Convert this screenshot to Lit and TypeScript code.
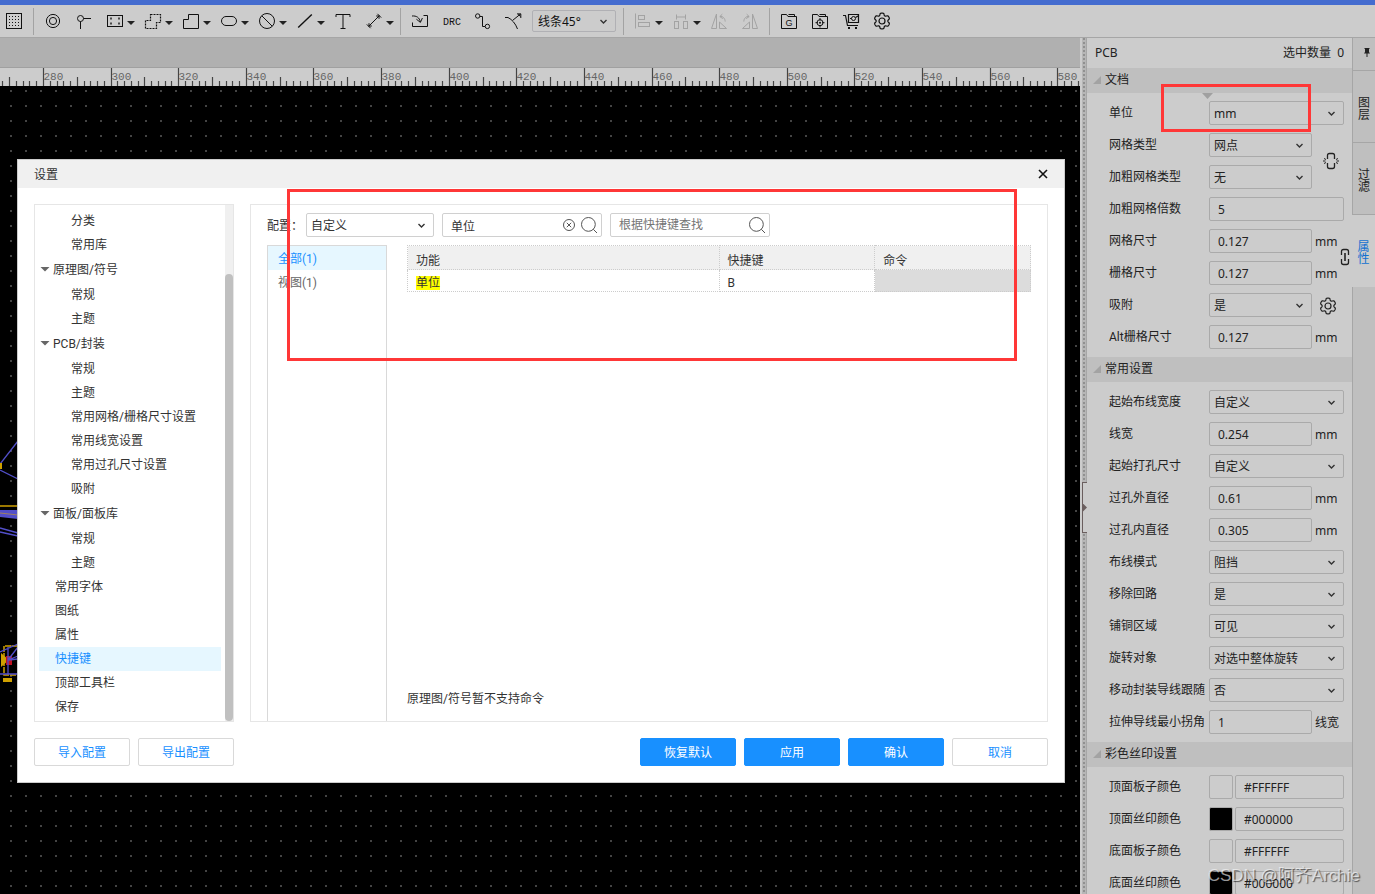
import { LitElement, html, svg, css, nothing } from "lit";
import { customElement, property } from "lit/decorators.js";
import { classMap } from "lit/directives/class-map.js";
import { styleMap } from "lit/directives/style-map.js";

/* Outline of the six-lobed gear, centred in a 16px box. */
const gearPath = (() => {
  const pts: string[] = [];
  for (let i = 0; i < 96; i++) {
    const a = (i / 96) * Math.PI * 2;
    const r = 6.8 + 1.1 * Math.tanh(2 * Math.cos(6 * (a - Math.PI / 2)) + 0.6);
    pts.push(`${(8 + r * Math.cos(a)).toFixed(2)} ${(8 + r * Math.sin(a)).toFixed(2)}`);
  }
  return `M${pts.join("L")}z`;
})();

const icons: Record<string, unknown> = {
  grid: svg`<rect x=".5" y=".5" width="15" height="15"/>
    ${[3, 6, 9, 12].map((y) => [3, 6, 9, 12].map((x) => svg`<rect class="dot" x=${x} y=${y} width="1" height="1"/>`))}`,
  pad: svg`<circle cx="8" cy="8" r="6.6"/><circle cx="8" cy="8" r="3.6"/>`,
  via: svg`<circle cx="4.5" cy="5.5" r="3"/><path d="M7.5 5.5H15M4.5 8.5V16"/>`,
  frame: svg`<rect x=".5" y="2.5" width="15" height="11"/><path d="M3 5.5h2M11 5.5h2M3 10.5h2M11 10.5h2" stroke-width="2" opacity=".7"/>`,
  dashed: svg`<path d="M5.5 1.5H15.5V9.5H11.5V15.5H.5V7.5H5.5z" stroke-dasharray="2 1" stroke-width="1.2"/>`,
  region: svg`<path d="M5.5 1.5H15.5V15.5H.5V6.5H5.5z"/>`,
  oval: svg`<rect x=".5" y="3.5" width="15" height="9" rx="4.5"/>`,
  forbid: svg`<circle cx="8" cy="8" r="7.5"/><path d="M2.8 2.8L13.2 13.2"/>`,
  line: svg`<path d="M1.2 14.6L14.8 1.4" stroke-width="1.4"/>`,
  text: svg`<path d="M1 4V1.5H15V4M8 1.5V15.5M5.5 15.5H10.5"/>`,
  dimension: svg`<path d="M2.5 13.5L13.5 2.5M.8 11.4L4.6 15.2M11.4 .8L15.2 4.6M3 10.2V13H5.8M10.2 3H13V5.8"/>`,
  import: svg`<path d="M.5 9.5V13.5H15.5V2.5H11.5M0 3C4.5 2.6 7.5 4.5 8.3 9M4.4 6.2L8.4 9.4L10.4 5"/>`,
  route: svg`<circle cx="3.7" cy="3" r="2.2"/><circle cx="13.4" cy="13.4" r="2.2"/><path d="M6 3.5H8.5V13.5H11"/>`,
  branch: svg`<path d="M0 4.5H3C7 6.5 10.5 10.5 12.5 16M7.6 7.4L15.5 1M12 .9H15.8V5M13.2 1.4L15.4 3.4"/>`,
  align: svg`<path d="M.5 .5V15.5"/><rect x="3.5" y="2.5" width="6" height="4"/><rect x="3.5" y="9.5" width="11" height="4"/>`,
  distribute: svg`<path d="M3.5 1.5V6.5M12.5 1.5V6.5M3.5 4H12.5"/><rect x="1.5" y="8.5" width="4" height="7"/><rect x="10.5" y="8.5" width="4" height="7"/>`,
  flipA: svg`<path d="M.5 15.5L5.5 1V15.5zM8.5 15.5V9L15.5 15.5zM9 3.5C12 3 14 5.5 14.2 8.5M11.3 1.2L8.8 3.6L11.8 5.6"/>`,
  flipB: svg`<path d="M15.5 15.5L10.5 1V15.5zM7.5 15.5V9L.5 15.5zM7 3.5C4 3 2 5.5 1.8 8.5M4.7 1.2L7.2 3.6L4.2 5.6"/>`,
  folderG: svg`<path d="M.5 15.5V1.5H5.5L7 3.5H15.5V15.5zM7.5 1.5H13.5V3"/><text x="8" y="13" text-anchor="middle">G</text>`,
  folderT: svg`<path d="M.5 15.5V1.5H5.5L7 3.5H15.5V15.5zM7.5 1.5H13.5V3M8 5V7.5M8 12V14.5M3.5 9.7H6M10 9.7H12.5"/><circle cx="8" cy="9.7" r="3"/><circle class="dot" cx="8" cy="9.7" r="1"/>`,
  cart: svg`<path d="M0 2.5H2.5L4.5 12.5H15M5.5 9.5V1.5H15.5V9.5zM7 5.5H8.5M12.5 4.5L15 3" stroke-width="1.2"/><circle cx="10.5" cy="5.5" r="2"/><path d="M5 15H7M12 15H14" stroke-width="2"/>`,
  gear: svg`<path d=${gearPath} stroke-width="1.2"/><circle cx="8" cy="8" r="3" stroke-width="1.2"/>`,
  unlink: svg`<path d="M4.5 6V2.5Q4.5.5 6.5.5H9.5Q11.5.5 11.5 2.5V6M4.5 10V13.5Q4.5 15.5 6.5 15.5H9.5Q11.5 15.5 11.5 13.5V10" stroke-width="1.3"/><path d="M0 8H2.5M1 5.5L3 6.5M1 10.5L3 9.5M13.5 8H16M15 5.5L13 6.5M15 10.5L13 9.5"/>`,
  link: svg`<path d="M4.5 6V2.5Q4.5.5 6.5.5H9.5Q11.5.5 11.5 2.5V6M4.5 10V13.5Q4.5 15.5 6.5 15.5H9.5Q11.5 15.5 11.5 13.5V10" stroke-width="1.3"/><path d="M8 4V12" stroke-width="1.6"/>`,
  search: svg`<circle cx="7.4" cy="7.4" r="6.9"/><path d="M12.3 12.3L16 16"/>`,
  clear: svg`<circle cx="8" cy="8" r="5.5"/><path d="M5.8 5.8L10.2 10.2M10.2 5.8L5.8 10.2"/>`,
  close: svg`<path d="M4 4L12 12M12 4L4 12" stroke-width="1.6"/>`,
  pin: svg`<path class="dot" d="M5.5 4H10.5V5H10V8L11 9.5H5L6 8V5H5.5zM7.5 9.5H8.5V13H7.5z"/>`,
};

const icon = (name: string) =>
  html`<svg class="icon" viewBox="0 0 16 16" width="16" height="16" aria-hidden="true">${icons[name]}</svg>`;

const base = css`
  :host, * { box-sizing: border-box; }
  .icon { display: block; flex: none; overflow: visible; fill: none; stroke: currentColor; stroke-width: 1; }
  .icon .dot, .icon text { fill: currentColor; stroke: none; }
  .icon text { font: 9px "Liberation Sans", sans-serif; }
  button { font: inherit; color: inherit; background: none; border: 0; padding: 0; margin: 0; }
  input, select { font: inherit; color: inherit; margin: 0; min-width: 0; border-radius: 2px; }
  .select { display: grid; align-items: center; min-width: 0; }
  .select select {
    grid-area: 1 / 1; width: 100%; height: 24px; appearance: none;
    padding: 2px 20px 0 4px; border: 1px solid #aaa; background: transparent;
  }
  .select svg { grid-area: 1 / 1; justify-self: end; margin-right: 8px; fill: none; stroke: #333; stroke-width: 1.4; pointer-events: none; }
`;

const dropDown = (id: string, value: string, label?: string) => html`
  <span class="select">
    <select id=${id} aria-label=${label ?? nothing}><option>${value}</option></select>
    <svg viewBox="0 0 9 9" width="9" height="9" aria-hidden="true"><path d="M1.5 3L4.5 6L7.5 3"/></svg>
  </span>`;

type Tool = { name: string; label: string; menu?: boolean; off?: boolean };

@customElement("tool-bar")
class ToolBar extends LitElement {
  static styles = [base, css`
    :host { display: flex; align-items: center; gap: 7px; height: 33px; padding-left: 2px; border-bottom: 1px solid #a6a6a6; background: #ccc; color: #111; flex: none; overflow: hidden; }
    .tool { display: flex; align-items: center; gap: 4px; width: 24px; height: 24px; padding-left: 4px; flex: none; }
    .menu { width: 31px; }
    .off .icon { color: #a3a3a3; }
    .caret { width: 8px; height: 4px; margin-top: 4px; background: #222; clip-path: polygon(0 0, 100% 0, 50% 100%); flex: none; }
    .sep { width: 1px; height: 27px; background: #a3a3a3; flex: none; }
    .drc { padding-top: 2px; font: 10px "Liberation Mono", monospace; }
    .mode { width: 84px; flex: none; }
    .mode select { height: 22px; border-color: #b0b0b4; padding: 2px 20px 0 5px; }
  `];

  private groups: Tool[][] = [
    [{ name: "grid", label: "网格" }],
    [
      { name: "pad", label: "焊盘" }, { name: "via", label: "过孔" },
      { name: "frame", label: "板框", menu: true }, { name: "dashed", label: "禁止区域", menu: true },
      { name: "region", label: "铺铜", menu: true }, { name: "oval", label: "挖槽", menu: true },
      { name: "forbid", label: "禁止", menu: true }, { name: "line", label: "线条", menu: true },
      { name: "text", label: "文本" }, { name: "dimension", label: "尺寸", menu: true },
    ],
    [
      { name: "import", label: "导入变更" }, { name: "drc", label: "检查DRC" },
      { name: "route", label: "布线" }, { name: "branch", label: "差分对" },
    ],
    [
      { name: "align", label: "对齐", menu: true, off: true }, { name: "distribute", label: "分布", menu: true, off: true },
      { name: "flipA", label: "左旋", off: true }, { name: "flipB", label: "右旋", off: true },
    ],
    [
      { name: "folderG", label: "Gerber" }, { name: "folderT", label: "坐标文件" },
      { name: "cart", label: "下单" }, { name: "gear", label: "设置" },
    ],
  ];

  private tool(t: Tool) {
    return html`<button class=${classMap({ tool: true, menu: !!t.menu, off: !!t.off })} aria-label=${t.label}>
      ${t.name === "drc" ? html`<span class="drc">DRC</span>` : icon(t.name)}
      ${t.menu ? html`<span class="caret"></span>` : nothing}
    </button>`;
  }

  render() {
    return this.groups.map((g, i) => html`
      ${i ? html`<span class="sep"></span>` : nothing}
      ${g.map((t) => this.tool(t))}
      ${i === 2 ? html`<span class="mode">${dropDown("mode", "线条45°", "布线拐角")}</span>` : nothing}
    `);
  }
}

@customElement("pcb-canvas")
class PcbCanvas extends LitElement {
  static styles = css`
    * { box-sizing: border-box; }
    :host { display: flex; flex-direction: column; flex: 1; min-width: 0; overflow: hidden; }
    .tabs { height: 30px; background: #b0b0b0; border-bottom: 1px solid #a0a0a0; flex: none; }
    .ruler { display: block; width: 100%; height: 18px; background: #ccc; flex: none; }
    .ruler text { font: 11px "Liberation Mono", monospace; fill: #666; }
    .ruler line { stroke: #444; stroke-width: 1.2; }
    .board { display: block; width: 100%; flex: 1; min-height: 0; background: #000; }
    .track { fill: none; stroke: #524fc9; stroke-width: 1.3; }
    .silk { fill: none; stroke: #cfa000; stroke-width: 1.5; }
  `;

  /* One minor tick per 2 units, a middle one per 10, a labelled one per 20. */
  private ticks() {
    const out: unknown[] = [];
    for (let u = 268; u <= 586; u += 2) {
      const x = Math.round(43 + (u - 280) * 3.381) + 0.5;
      const major = u % 20 === 0;
      const top = major ? 0 : u % 10 === 0 ? 9 : 13;
      out.push(svg`<line x1=${x} x2=${x} y1=${top} y2="18"/>`);
      if (major) out.push(svg`<text x=${x} y="12">${u}</text>`);
    }
    return out;
  }

  render() {
    return html`
      <div class="tabs"></div>
      <svg class="ruler">${this.ticks()}</svg>
      <svg class="board">
        <defs><pattern id="dots" width="15" height="15" patternUnits="userSpaceOnUse" x="10" y="4">
          <rect width="2" height="2" fill="#444"/></pattern></defs>
        <rect width="100%" height="100%" fill="url(#dots)"/>
        <path class="track" d="M0 378L18 355M0 384L18 393M0 442L18 447M0 446L18 450"/>
        <rect x="0" y="377" width="2" height="6" fill="#cfa000"/>
        <path class="silk" d="M0 420H18"/>
        <path d="M0 424L18 424V433L0 431z" fill="#524fc9"/>
        <path d="M0 427L18 429" stroke="#a08060" fill="none"/>
        <path class="silk" d="M18 560H4V589H18" stroke-width="2" stroke-dasharray="6 1"/>
        <path d="M1 567L9 574L1 581z" fill="#cfa000"/>
        <path d="M6 570h6v9h-6z" fill="#c01020"/>
        <path class="track" d="M0 566L18 558M8 561V588M8 574L18 561M8 574L18 570M0 588H18M8 574L18 573"/>
        <path d="M3 592h9v4h-9z" fill="#cfa000"/>
      </svg>`;
  }
}

type TreeNode = { text: string; kind: "group" | "leaf" | "top"; on?: boolean };

@customElement("settings-dialog")
class SettingsDialog extends LitElement {
  static styles = [base, css`
    :host { display: block; background: #fff; border: 1px solid #ccc; color: #333; font: 12px/16px Roboto, "Noto Sans CJK SC", sans-serif; }
    .title { display: flex; align-items: center; justify-content: space-between; height: 28px; padding: 0 13px 0 16px; background: #f0f0f0; }
    .title h1 { margin: 0; padding-top: 2px; font: inherit; }
    .title .icon { color: #111; }
    .body { display: flex; gap: 16px; padding: 16px; }
    .side { display: flex; flex: 0 0 200px; border: 1px solid #e6e6e6; }
    .tree { flex: 1; list-style: none; margin: 0; padding: 4px 4px 2px; }
    .node { display: flex; align-items: center; width: 100%; height: 24px; padding-left: 32px; text-align: left; white-space: nowrap; }
    .top { padding-left: 16px; }
    .group { height: 26px; padding-left: 1px; gap: 3px; }
    .on { background: #e6f7ff; color: #1890ff; }
    .arrow { width: 10px; height: 5px; margin-bottom: 2px; background: #666; clip-path: polygon(0 0, 100% 0, 50% 100%); }
    .bar { width: 8px; background: #f0f0f0; padding-top: 69px; display: flex; }
    .thumb { flex: 1; border-radius: 4px; background: #c0c0c0; }
    .main { flex: 1; min-width: 0; display: flex; flex-direction: column; gap: 8px; border: 1px solid #e6e6e6; padding: 8px 16px 0; }
    .filters { display: flex; align-items: center; gap: 8px; }
    .config { display: flex; align-items: center; }
    .config label { width: 39px; padding-top: 2px; }
    .config .select { width: 128px; }
    .filters .select select { border-color: #d0d0d0; }
    .find { display: flex; align-items: center; gap: 4px; width: 160px; height: 24px; padding-right: 4px; border: 1px solid #d0d0d0; border-radius: 2px; color: #555; }
    .find input { flex: 1; height: 22px; border: 0; background: none; padding: 0 0 0 8px; outline: 0; color: #333; }
    .find input::placeholder { color: #757575; opacity: 1; }
    .split { flex: 1; display: flex; gap: 20px; }
    .cats { flex: 0 0 120px; border: 1px solid #d9d9d9; border-bottom: 0; color: #666; }
    .cats .node { padding: 2px 0 0 10px; }
    .cats .on { color: #1890ff; }
    .content { flex: 1; min-width: 0; display: flex; flex-direction: column; justify-content: space-between; }
    table { width: 100%; table-layout: fixed; border-collapse: collapse; }
    th, td { border: 1px dotted #ccc; padding: 0 8px; text-align: left; font-weight: 400; }
    th { height: 24px; background: #f0f0f0; padding-top: 6px; }
    td { height: 22px; padding-top: 4px; }
    .wide { width: 50%; }
    .blocked { background: #dcdcdc; }
    mark { background: #ff0; color: inherit; }
    .note { margin: 0 0 14px; }
    .foot { display: flex; gap: 8px; padding: 0 16px 16px; }
    .btn { width: 96px; height: 28px; padding-top: 2px; border: 1px solid #d9d9d9; border-radius: 2px; color: #1890ff; }
    .primary { background: #1890ff; border-color: #1890ff; color: #fff; }
    .push { margin-left: auto; }
  `];

  private nodes: TreeNode[] = [
    { text: "分类", kind: "leaf" }, { text: "常用库", kind: "leaf" },
    { text: "原理图/符号", kind: "group" }, { text: "常规", kind: "leaf" }, { text: "主题", kind: "leaf" },
    { text: "PCB/封装", kind: "group" }, { text: "常规", kind: "leaf" }, { text: "主题", kind: "leaf" },
    { text: "常用网格/栅格尺寸设置", kind: "leaf" }, { text: "常用线宽设置", kind: "leaf" },
    { text: "常用过孔尺寸设置", kind: "leaf" }, { text: "吸附", kind: "leaf" },
    { text: "面板/面板库", kind: "group" }, { text: "常规", kind: "leaf" }, { text: "主题", kind: "leaf" },
    { text: "常用字体", kind: "top" }, { text: "图纸", kind: "top" }, { text: "属性", kind: "top" },
    { text: "快捷键", kind: "top", on: true }, { text: "顶部工具栏", kind: "top" }, { text: "保存", kind: "top" },
  ];

  render() {
    return html`
      <header class="title"><h1>设置</h1><button aria-label="关闭">${icon("close")}</button></header>
      <div class="body">
        <nav class="side">
          <ul class="tree">
            ${this.nodes.map((n) => html`<li><button class=${classMap({ node: true, [n.kind]: true, on: !!n.on })}>
              ${n.kind === "group" ? html`<span class="arrow"></span>` : nothing}${n.text}</button></li>`)}
          </ul>
          <div class="bar"><div class="thumb"></div></div>
        </nav>
        <section class="main">
          <div class="filters">
            <div class="config"><label for="config">配置：</label>${dropDown("config", "自定义")}</div>
            <div class="find">
              <input type="text" aria-label="根据功能查找" .value=${"单位"}>
              <button aria-label="清除">${icon("clear")}</button><button aria-label="查找">${icon("search")}</button>
            </div>
            <div class="find">
              <input type="text" aria-label="根据快捷键查找" placeholder="根据快捷键查找">
              <button aria-label="查找">${icon("search")}</button>
            </div>
          </div>
          <div class="split">
            <div class="cats"><button class="node on">全部(1)</button><button class="node">视图(1)</button></div>
            <div class="content">
              <table>
                <thead><tr><th class="wide">功能</th><th>快捷键</th><th>命令</th></tr></thead>
                <tbody><tr><td><mark>单位</mark></td><td>B</td><td class="blocked"></td></tr></tbody>
              </table>
              <p class="note">原理图/符号暂不支持命令</p>
            </div>
          </div>
        </section>
      </div>
      <footer class="foot">
        <button class="btn">导入配置</button><button class="btn">导出配置</button>
        <button class="btn primary push">恢复默认</button><button class="btn primary">应用</button>
        <button class="btn primary">确认</button><button class="btn">取消</button>
      </footer>`;
  }
}

type Row = { label: string; value: string; type: "select" | "input" | "color"; short?: boolean; unit?: string; icon?: string };

@customElement("property-row")
class PropertyRow extends LitElement {
  static styles = [base, css`
    :host { display: flex; align-items: center; height: 24px; white-space: nowrap; }
    label { flex: 0 0 100px; font-family: Roboto, "Noto Sans CJK SC", sans-serif; }
    .field { flex: 1; display: flex; gap: 2px; min-width: 0; }
    .short { flex: 0 0 103px; }
    .select { flex: 1; }
    input { flex: 1; width: 100%; height: 24px; padding: 0 8px; border: 1px solid #aaa; background: transparent; }
    .swatch { flex: 0 0 24px; height: 24px; border: 1px solid #aaa; border-radius: 2px; }
    .unit { padding: 2px 0 0 3px; }
    .tail { padding: 2px 0 0 8px; }
  `];
  @property({ attribute: false }) row!: Row;

  render() {
    const r = this.row;
    return html`
      <label for="field">${r.label}</label>
      <span class=${classMap({ field: true, short: !!r.short })}>
        ${r.type === "color" ? html`<button class="swatch" aria-label="选择颜色"
          style=${styleMap({ background: r.value === "#000000" ? r.value : "transparent" })}></button>` : nothing}
        ${r.type === "select" ? dropDown("field", r.value) : html`<input id="field" type="text" .value=${r.value}>`}
      </span>
      ${r.unit ? html`<span class="unit">${r.unit}</span>` : nothing}
      ${r.icon ? html`<button class="tail" aria-label="设置">${icon(r.icon)}</button>` : nothing}`;
  }
}

@customElement("property-panel")
class PropertyPanel extends LitElement {
  static styles = [base, css`
    :host { display: flex; flex: none; color: #222; background: #ccc; font: 12px/16px "Noto Sans", "Noto Sans CJK SC", sans-serif; overflow: hidden; }
    .split { position: relative; width: 7px; border-left: 2px solid #ccc; border-right: 1px solid #a6a6a6; background: radial-gradient(circle at 1px 1px, #909090 1px, transparent 1px) 1px 0 / 4px 4px #b6b6b6; }
    .grip { position: absolute; left: 0; top: 444px; width: 5px; height: 51px; border: 1px solid #6b5f5f; border-right: 0; background: #ccc; display: flex; align-items: center; }
    .grip::before { content: ""; width: 4px; height: 8px; background: #6b5f5f; clip-path: polygon(0 0, 100% 50%, 0 100%); }
    .panel { width: 265px; }
    .head { display: flex; justify-content: space-between; align-items: center; height: 30px; padding: 0 8px; }
    .section { display: flex; align-items: center; gap: 4px; height: 25px; margin: 0; padding: 0 6px 1px; background: #bfbfbf; font: inherit; }
    .corner { width: 8px; height: 8px; background: #a3a3a3; clip-path: polygon(100% 0, 100% 100%, 0 100%); }
    .rows { position: relative; display: flex; flex-direction: column; gap: 8px; padding: 8px 8px 8px 22px; }
    .pair { display: flex; align-items: center; }
    .stack { display: flex; flex-direction: column; gap: 8px; flex: 1; }
    .unlinked { padding-right: 5px; gap: 11px; }
    .linked { margin-right: -8px; }
    .drop { position: absolute; left: 115px; top: 0; width: 11px; height: 6px; background: #a0a0a0; clip-path: polygon(0 0, 100% 0, 50% 100%); }
    .focus { position: absolute; left: 74px; top: -9px; width: 150px; height: 48px; border: 3px solid #ff3737; pointer-events: none; }
    .rail { width: 23px; background: #bfbfbf; border-left: 1px solid #a6a6a6; font-family: "Noto Sans CJK SC", sans-serif; line-height: 12px; }
    .pin { display: flex; justify-content: center; align-items: center; width: 100%; height: 33px; padding: 0 0 4px 6px; border-bottom: 1px solid #a6a6a6; }
    .tab { display: flex; justify-content: center; align-items: center; width: 100%; height: 72px; padding: 2px 5px 0; border-bottom: 1px solid #a6a6a6; }
    .active { background: #ccc; color: #1271d0; border-bottom: 0; margin-left: -1px; width: 23px; }
  `];

  private mm = (label: string, value: string): Row => ({ label, value, type: "input", short: true, unit: "mm" });
  private pick = (label: string, value: string): Row => ({ label, value, type: "select" });

  private row = (r: Row) => html`<property-row .row=${r}></property-row>`;
  private heading = (t: string) => html`<h2 class="section"><span class="corner"></span>${t}</h2>`;

  render() {
    return html`
      <div class="split"><div class="grip"></div></div>
      <div class="panel">
        <div class="head"><span>PCB</span><span>选中数量&nbsp; 0</span></div>
        ${this.heading("文档")}
        <div class="rows">
          ${this.row(this.pick("单位", "mm"))}
          <div class="pair unlinked">
            <div class="stack">
              ${this.row({ ...this.pick("网格类型", "网点"), short: true })}
              ${this.row({ ...this.pick("加粗网格类型", "无"), short: true })}
            </div>${icon("unlink")}
          </div>
          ${this.row({ label: "加粗网格倍数", value: "5", type: "input" })}
          <div class="pair linked">
            <div class="stack">
              ${this.row(this.mm("网格尺寸", "0.127"))}
              ${this.row(this.mm("栅格尺寸", "0.127"))}
            </div>${icon("link")}
          </div>
          ${this.row({ ...this.pick("吸附", "是"), short: true, icon: "gear" })}
          ${this.row(this.mm("Alt栅格尺寸", "0.127"))}
          <span class="drop"></span><span class="focus"></span>
        </div>
        ${this.heading("常用设置")}
        <div class="rows">
          ${[
            this.pick("起始布线宽度", "自定义"), this.mm("线宽", "0.254"), this.pick("起始打孔尺寸", "自定义"),
            this.mm("过孔外直径", "0.61"), this.mm("过孔内直径", "0.305"), this.pick("布线模式", "阻挡"),
            this.pick("移除回路", "是"), this.pick("铺铜区域", "可见"), this.pick("旋转对象", "对选中整体旋转"),
            this.pick("移动封装导线跟随", "否"), { ...this.mm("拉伸导线最小拐角", "1"), unit: "线宽" },
          ].map(this.row)}
        </div>
        ${this.heading("彩色丝印设置")}
        <div class="rows">
          ${[["顶面板子颜色", "#FFFFFF"], ["顶面丝印颜色", "#000000"], ["底面板子颜色", "#FFFFFF"], ["底面丝印颜色", "#000000"]]
            .map(([label, value]) => this.row({ label, value, type: "color" }))}
        </div>
      </div>
      <div class="rail">
        <button class="pin" aria-label="固定">${icon("pin")}</button>
        <button class="tab">图层</button><button class="tab">过滤</button><button class="tab active">属性</button>
      </div>`;
  }
}

@customElement("app-root")
class AppRoot extends LitElement {
  static styles = css`
    * { box-sizing: border-box; }
    :host { display: flex; flex-direction: column; position: relative; height: 100vh; overflow: hidden; background: #ccc; font: 12px/16px "Noto Sans", "Noto Sans CJK SC", sans-serif; color: #222; }
    .stripe { height: 5px; background: #446ccf; flex: none; }
    .work { flex: 1; display: flex; min-height: 0; }
    .stage { position: relative; flex: 1; display: flex; min-width: 0; }
    .dialog { position: absolute; left: 17px; right: 15px; top: 121px; }
    .focus { position: absolute; left: 287px; right: 63px; top: 151px; height: 172px; border: 3px solid #ff3737; pointer-events: none; }
    .mark { position: absolute; right: 15px; bottom: 6px; font: 17px/24px "Liberation Sans", "Noto Sans CJK SC", sans-serif; color: rgba(255, 255, 255, 0.6); text-shadow: 1px 1px 1px rgba(0, 0, 0, 0.6); white-space: nowrap; }
  `;

  render() {
    return html`
      <div class="stripe"></div>
      <tool-bar></tool-bar>
      <div class="work">
        <div class="stage">
          <pcb-canvas></pcb-canvas>
          <settings-dialog class="dialog" role="dialog" aria-label="设置"></settings-dialog>
          <div class="focus"></div>
        </div>
        <property-panel></property-panel>
      </div>
      <div class="mark">CSDN @阿齐Archie</div>`;
  }
}
